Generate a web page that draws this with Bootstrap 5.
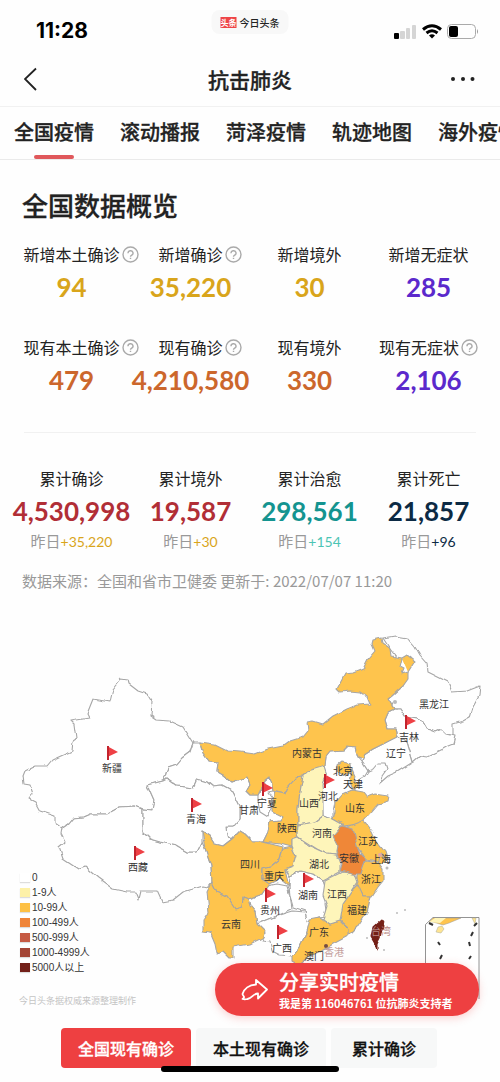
<!DOCTYPE html>
<html lang="zh-CN">
<head>
<meta charset="utf-8">
<meta name="viewport" content="width=device-width, initial-scale=1">
<title>抗击肺炎</title>
<link href="https://cdn.jsdelivr.net/npm/bootstrap@5.3.0/dist/css/bootstrap.min.css" rel="stylesheet">
<style>
  body { font-family: "Noto Sans CJK SC", sans-serif; color: #222; background: #fefefe; overflow-x: hidden; }
  .status-row { height: 54px; padding: 8px 20px 0 36px; }
  .clock { font: 700 21px/40px Inter, sans-serif; color: #000; }
  .app-pill { left: 50%; top: 10px; transform: translateX(-50%); height: 24px; padding: 0 9px; gap: 3px; border-radius: 8px; background: #f8f8f8; font-size: 10px; font-weight: 500; white-space: nowrap; }
  .app-logo { background: #ee4447; color: #fff; font-size: 8px; font-weight: 700; line-height: 11px; }
  .title-row { height: 52px; padding: 0 24px 2px; }
  .title-row h1 { font-size: 21px; line-height: 32px; font-weight: 500; }
  .title-row button { line-height: 0; }
  .title-row h1, .tab-row a, .overview h2, .share-big, .mode-row button { -webkit-text-stroke: .3px currentColor; }
  .tab-row { gap: 26px; padding: 0 14px; border-top: 1px solid #f1f1f1; border-bottom: 1px solid #eaeaea; overflow: hidden; }
  .tab-row a { flex: none; font-size: 20px; line-height: 30px; padding: 10px 0 12px; font-weight: 500; color: #222; text-decoration: none; white-space: nowrap; }
  .tab-row a.active::after { content: ""; position: absolute; left: 50%; bottom: 0; width: 40px; margin-left: -20px; height: 4px; border-radius: 2px; background: #e0585b; }
  .overview { padding: 27px 12px 26px; }
  .overview h2 { font-size: 26px; line-height: 36px; font-weight: 500; padding-left: 10px; margin-bottom: 19px; }
  .stat-row + .stat-row { margin-top: 28px; }
  .stat-label { font-size: 16px; line-height: 24px; white-space: nowrap; }
  .stat-num { font: 700 26px/40px Lato, sans-serif; padding-top: 1px; white-space: nowrap; }
  .stat-day { font-size: 15px; line-height: 20px; color: #999; white-space: nowrap; }
  .stat-day b { font: 400 14px/20px Lato, sans-serif; }
  .help { width: 17px; height: 17px; margin-left: 2px; }
  .help-hang { position: absolute; left: 100%; top: 4px; }
  .rule { height: 1px; background: #f1f1f1; margin: 32px 12px 33px; }
  .source { font-size: 15px; line-height: 24px; color: #999; margin: 17px 0 0 10px; }
  .c-gold { color: #d9a51b; } .c-rust { color: #cc672c; } .c-violet { color: #5b29cc; }
  .c-red { color: #b12e36; } .c-teal { color: #149490; } .c-navy { color: #0c2a44; } .c-mint { color: #4cc4b4; }
  .map-labels { font-size: 10px; fill: #333; text-anchor: middle; }
  .legend { left: 20px; bottom: 44px; font: 10px/15px "Liberation Sans", "Noto Sans CJK SC", sans-serif; color: #333; }
  .legend i { width: 10px; height: 9px; margin-right: 2px; box-shadow: 0 1px 1px #ddd; }
  .credit { left: 19px; bottom: 10px; font-size: 9px; line-height: 16px; color: #c4c4c4; }
  .share-btn { right: 21px; bottom: 3px; border: 0; border-radius: 27px; background: #ee4041; color: #fff; width: 264px; height: 53px; padding: 0 0 0 26px; gap: 11px; box-shadow: 0 2px 8px #ee404140; text-align: left; white-space: nowrap; }
  .share-big { font-size: 20px; line-height: 26px; font-weight: 500; }
  .share-small { font-size: 11px; line-height: 16px; font-weight: 700; }
  .mode-row { padding: 9px 61px 13px; gap: 5px; }
  .mode-row button { border: 0; border-radius: 4px; background: #f7f8f8; color: #111; font-size: 16px; font-weight: 500; line-height: 40px; padding: 0 17px; white-space: nowrap; }
  .mode-row button.active { background: #ee4041; color: #fff; }
  .mode-row button:last-child { padding: 0 21px; }
  .home-bar { left: 50%; bottom: 9px; width: 178px; height: 6px; margin-left: -89px; border-radius: 3px; background: #000; }
</style>
</head>
<body>
<header>
  <div class="status-row position-relative d-flex justify-content-between align-items-center">
    <span class="clock">11:28</span>
    <span class="app-pill position-absolute d-flex align-items-center"><span class="app-logo">头条</span>今日头条</span>
    <svg width="87" height="18" viewBox="0 0 87 18" aria-label="信号 无线网络 电量">
      <rect x="1" y="11" width="5" height="6" rx="1"/>
      <g fill="#d5d5d5"><rect x="7" y="9" width="5" height="8" rx="1"/><rect x="13" y="6" width="4" height="11" rx="1"/><rect x="19" y="3" width="4" height="14" rx="1"/></g>
      <g fill="none" stroke="#000" stroke-width="3"><path d="M30 7.500Q39 0 48 7.500M33.500 11Q39 6.500 44.500 11"/></g>
      <path d="M36 13.500Q39 11 42 13.500L39 16.500Z"/>
      <rect x="54.500" y="2.500" width="28" height="14" rx="4" fill="none" stroke="#aaa"/>
      <rect x="56" y="4" width="9" height="11" rx="2"/><path d="M84 7q2 2.500 0 5z" fill="#999"/>
    </svg>
  </div>
  <div class="title-row d-flex justify-content-between align-items-center">
    <button class="btn p-0 border-0" aria-label="返回"><svg width="26" height="24" viewBox="0 0 26 24" fill="none" stroke="#222" stroke-width="1.800"><path d="M12 1.500 1 12l11 11"/></svg></button>
    <h1 class="m-0">抗击肺炎</h1>
    <button class="btn p-0 border-0" aria-label="更多"><svg width="26" height="6" viewBox="0 0 26 6" fill="#222"><circle cx="3" cy="3" r="2"/><circle cx="13" cy="3" r="2"/><circle cx="22.500" cy="3" r="2"/></svg></button>
  </div>
  <nav class="tab-row d-flex">
    <a href="#" class="active position-relative">全国疫情</a><a href="#">滚动播报</a><a href="#">菏泽疫情</a><a href="#">轨迹地图</a><a href="#">海外疫情</a>
  </nav>
</header>
<svg width="0" height="0" class="position-absolute" aria-hidden="true">
  <defs>
    <g id="helpMark" fill="none" stroke="#aaa" stroke-width="1.400"><circle cx="8.500" cy="8.500" r="7.500"/><path d="M6 7.200a2.500 2.400 0 1 1 3.700 2q-1.200.6-1.200 1.600M8.500 11.700v1.400"/></g>
    <g id="flag"><path d="M0 0 11 6 1.500 10.500V14H0Z" fill="#ee4045"/><path d="M0 0h2v14H0z" fill="#c3242e"/></g>
  </defs>
</svg>
<main>
  <section class="overview">
    <h2>全国数据概览</h2>
    <div class="stat-row row g-0 row-cols-4 text-center">
      <div class="col d-flex flex-column align-items-center"><div class="stat-label position-relative">新增本土确诊<svg class="help help-hang" viewBox="0 0 17 17"><use href="#helpMark"/></svg></div><div class="stat-num c-gold">94</div></div>
      <div class="col d-flex flex-column align-items-center"><div class="stat-label position-relative">新增确诊<svg class="help help-hang" viewBox="0 0 17 17"><use href="#helpMark"/></svg></div><div class="stat-num c-gold">35,220</div></div>
      <div class="col d-flex flex-column align-items-center"><div class="stat-label">新增境外</div><div class="stat-num c-gold">30</div></div>
      <div class="col d-flex flex-column align-items-center"><div class="stat-label">新增无症状</div><div class="stat-num c-violet">285</div></div>
    </div>
    <div class="stat-row row g-0 row-cols-4 text-center">
      <div class="col d-flex flex-column align-items-center"><div class="stat-label position-relative">现有本土确诊<svg class="help help-hang" viewBox="0 0 17 17"><use href="#helpMark"/></svg></div><div class="stat-num c-rust">479</div></div>
      <div class="col d-flex flex-column align-items-center"><div class="stat-label position-relative">现有确诊<svg class="help help-hang" viewBox="0 0 17 17"><use href="#helpMark"/></svg></div><div class="stat-num c-rust">4,210,580</div></div>
      <div class="col d-flex flex-column align-items-center"><div class="stat-label">现有境外</div><div class="stat-num c-rust">330</div></div>
      <div class="col d-flex flex-column align-items-center"><div class="stat-label d-flex align-items-center">现有无症状<svg class="help" viewBox="0 0 17 17"><use href="#helpMark"/></svg></div><div class="stat-num c-violet">2,106</div></div>
    </div>
    <div class="rule"></div>
    <div class="row g-0 row-cols-4 text-center">
      <div class="col d-flex flex-column align-items-center"><div class="stat-label">累计确诊</div><div class="stat-num c-red">4,530,998</div><div class="stat-day">昨日<b class="c-gold">+35,220</b></div></div>
      <div class="col d-flex flex-column align-items-center"><div class="stat-label">累计境外</div><div class="stat-num c-red">19,587</div><div class="stat-day">昨日<b class="c-gold">+30</b></div></div>
      <div class="col d-flex flex-column align-items-center"><div class="stat-label">累计治愈</div><div class="stat-num c-teal">298,561</div><div class="stat-day">昨日<b class="c-mint">+154</b></div></div>
      <div class="col d-flex flex-column align-items-center"><div class="stat-label">累计死亡</div><div class="stat-num c-navy">21,857</div><div class="stat-day">昨日<b class="c-navy">+96</b></div></div>
    </div>
    <p class="source">数据来源：全国和省市卫健委 更新于: 2022/07/07 11:20</p>
  </section>
  <section class="position-relative">
    <svg class="d-block w-100" viewBox="0 620 500 400" role="img" aria-label="全国疫情地图">
      <defs>
        <filter id="coast" x="-5%" y="-5%" width="110%" height="110%" color-interpolation-filters="sRGB"><feTurbulence type="fractalNoise" baseFrequency=".12" numOctaves="1" seed="4"/><feDisplacementMap in="SourceGraphic" scale="5" xChannelSelector="R" yChannelSelector="G"/></filter>
      </defs>
      <g filter="url(#coast)" stroke="#a6a6a6" stroke-width="1.100" stroke-linejoin="round" fill="#fff">
        <path d="M121 680 128 681 129 685 138 692 147 695 152 703 151 717 157 721 170 722 183 728 193 744 190 753 182 759 177 765 168 768 165 778 163 782 147 786 150 793 154 802 152 811 143 810 135 807 120 808 107 815 90 815 83 818 73 819 68 825 62 829 55 824 55 817 40 812 35 803 29 800 33 795 30 786 24 785 23 777 25 772 35 767 47 767 52 761 72 752 73 742 76 740 74 725 71 722 89 719 87 715 93 700 110 703 113 690Z"/>
        <path d="M62 829 68 825 73 819 83 818 90 815 107 815 120 808 135 807 143 810 143 833 150 840 160 843 177 847 187 853 197 853 202 843 205 850 211 867 212 883 208 888 203 887 193 890 183 893 173 901 162 903 157 892 140 892 138 900 135 893 127 893 113 890 98 879 85 868 78 870 63 860 59 848 65 843 61 835Z"/>
        <path d="M193 744 200 744 203 755 208 762 218 763 217 772 222 775 232 783 247 778 250 785 246 792 250 796 258 796 273 800 283 818 280 822 270 823 268 833 263 843 253 843 245 835 240 832 232 840 228 837 227 828 233 828 240 820 240 807 233 793 222 787 213 788 207 783 197 780 193 789 177 787 167 780 163 782 165 778 168 768 177 765 182 759 190 753Z"/>
        <path d="M258 796 263 788 265 782 270 778 272 785 273 792 268 793 273 800 272 810 268 818 260 813 258 803Z"/>
        <path d="M143 810 152 811 154 802 150 793 147 786 163 782 167 780 177 787 193 789 197 780 207 783 213 788 222 787 233 793 240 807 240 820 233 828 227 828 228 837 232 840 223 847 215 845 210 837 202 832 202 843 197 853 187 853 177 847 160 843 150 840 143 833Z"/>
        <path d="M383 639 395 637 407 639 415 648 420 657 427 665 428 673 448 683 452 693 467 692 480 687 479 697 473 708 470 718 463 722 453 725 453 737 447 735 442 730 435 733 427 730 423 723 417 720 405 718 400 710 394 710 388 700 403 687 408 673 390 650Z"/>
        <path d="M388 713 394 710 400 710 405 718 417 720 423 723 427 730 435 733 442 730 447 735 455 737 453 745 448 747 443 750 433 755 427 758 420 757 413 763 410 753 407 743 397 737 395 730 388 730 385 720Z"/>
        <path d="M397 737 407 743 410 753 413 763 397 773 388 777 380 784 382 777 387 770 385 764 378 764 373 770 368 772 362 763 365 755 373 750 383 745Z"/>
        <path d="M325 765 326 758 330 753 343 752 348 747 355 748 358 758 362 763 368 772 365 777 360 780 353 792 343 797 335 803 333 812 333 820 323 817 322 797 320 792 325 785 323 777Z"/>
        <path d="M248 900 263 895 267 887 277 885 287 887 290 897 292 910 277 917 257 925 255 913 250 907Z"/>
        <path d="M290 877 300 872 313 875 323 882 327 893 325 905 327 917 318 918 313 925 307 922 305 912 293 908 290 897 289 887Z"/>
        <path d="M257 925 277 917 293 912 305 913 307 922 310 922 307 933 300 947 292 957 280 956 272 952 270 943 262 942 265 935 258 930Z"/>
        <g fill="#fec44d">
          <path d="M200 744 215 746 227 752 240 753 255 755 268 750 283 747 290 742 303 738 308 732 307 723 313 722 323 725 333 717 347 710 357 706 370 705 367 698 360 693 350 692 340 693 337 690 345 675 353 674 363 670 368 660 375 652 372 645 373 641 382 639 383 645 390 650 391 657 402 659 407 656 415 662 408 673 408 680 403 687 392 697 388 700 394 710 388 713 385 720 388 730 395 730 397 738 383 745 373 750 365 755 363 760 358 758 355 748 348 747 343 752 330 753 326 758 325 767 320 770 308 772 303 777 297 778 288 788 285 795 273 792 272 785 270 778 265 782 258 796 250 796 246 792 250 785 247 778 232 783 222 775 217 772 218 763 208 762 203 755Z"/>
          <path d="M402 659 400 668 404 670 402 675 408 673" fill="#fff"/>
          <path d="M342 763 350 765 351 773 345 777 338 773 338 766Z"/><path d="M352 770 355 777 354 782 358 785 353 791 350 783Z"/>
          <path d="M343 795 352 791 363 793 367 798 375 795 389 797 388 802 378 805 372 812 363 822 360 825 343 827 342 825 333 820 335 813 336 803Z"/>
          <path d="M297 778 303 777 300 793 298 810 298 826 297 835 298 838 292 840 292 848 280 845 263 843 268 833 270 823 280 822 283 818 273 813 273 800 275 793 285 795 288 788Z"/>
          <path d="M202 832 210 837 215 845 223 847 232 840 240 832 245 835 253 843 263 843 283 848 280 860 270 868 262 870 262 880 270 885 263 895 248 900 243 898 242 908 235 910 227 898 217 893 212 883 211 867 205 850Z"/>
          <path d="M283 850 280 860 270 868 262 870 262 880 270 885 280 880 289 887 285 870 293 867 296 857 292 848Z"/>
          <path d="M212 883 217 893 227 898 235 910 242 908 243 898 248 900 250 907 255 913 257 925 265 933 264 938 250 945 233 948 233 959 229 959 223 953 217 955 215 945 210 933 203 932 203 922 209 913 207 893Z"/>
          <path d="M347 828 363 822 365 823 372 832 377 843 385 853 387 860 377 862 365 860 357 847Z"/><path d="M380 855 387 861 378 866Z"/>
          <path d="M365 861 378 863 383 870 383 882 378 888 372 897 363 897 357 887 357 876Z"/>
          <path d="M358 886 363 897 371 897 367 913 357 928 348 937 347 928 340 922 343 905 352 892Z"/>
          <path d="M310 920 320 918 330 925 340 922 348 930 348 937 333 945 320 953 307 958 297 966 292 963 292 957 300 947 307 933Z"/>
        </g>
        <g fill="#fef5ba">
          <path d="M303 777 308 772 325 767 327 773 322 785 323 797 323 817 315 823 298 826 298 810 300 793Z"/>
          <path d="M298 826 315 823 323 817 333 820 342 825 335 837 338 847 337 856 327 855 317 850 298 838 297 835Z"/>
          <path d="M292 840 298 838 310 847 327 855 337 856 340 862 340 873 323 882 313 875 300 872 290 877 285 870 293 867 296 857 292 848Z"/>
          <path d="M325 882 333 878 343 873 355 875 358 883 352 892 343 905 340 922 330 925 323 920 327 907 323 897Z"/>
        </g>
        <path fill="#ef8738" d="M342 827 347 828 353 830 355 837 357 847 360 855 365 860 362 868 360 875 353 875 340 872 342 865 337 853 338 847 333 837Z"/>
        <path fill="#742017" stroke="#742017" d="M382 920 384 923 380 938 377 944 377 951 375 945 371 938 373 928Z"/>
      </g>
      <g fill="#e6a7a5"><circle cx="380" cy="856" r="2"/><circle cx="326" cy="947" r="2" fill="#754c42"/></g>
      <g fill="#bbb"><circle cx="387" cy="869" r="1.500"/><circle cx="397" cy="914" r="1"/><circle cx="405" cy="911" r="1"/><circle cx="384" cy="951" r="1"/><circle cx="395" cy="703" r="2"/><circle cx="367" cy="939" r="1"/></g>
      <path d="M425.500 1000V925.500L433 918.500H479V1000" fill="#fff" stroke="#777" stroke-width=".8"/>
      <path d="M429 923 433 919H461L449 924 443 926 433 923Z" fill="#fec44d" stroke="#999" stroke-width=".5"/><path d="M429 923 435 919H446L440 924Z" fill="#fef5ba"/><path d="M472 919h4l-1 6ZM438 928l4-1 2 3-3 4-5-1Z" fill="#ffe591" stroke="#aa9" stroke-width=".5"/>
      <g stroke="#333" stroke-width="2"><path d="m429 924 4 2M438 943l2 3M442 956l-2 4M477 924l-3 3M473 933l-2 4M469 943l1 4M471 957l-2 3"/></g>
      <g class="map-labels">
        <text x="112" y="773">新疆</text><text x="196" y="824">青海</text><text x="138" y="872">西藏</text><text x="307" y="758">内蒙古</text>
        <text x="434" y="709">黑龙江</text><text x="409" y="742">吉林</text><text x="396" y="758">辽宁</text><text x="343" y="776">北京</text>
        <text x="353" y="789">天津</text><text x="328" y="801">河北</text><text x="309" y="808">山西</text><text x="267" y="808">宁夏</text>
        <text x="249" y="815">甘肃</text><text x="355" y="813">山东</text><text x="287" y="833">陕西</text><text x="322" y="838">河南</text>
        <text x="368" y="846">江苏</text><text x="349" y="863">安徽</text><text x="381" y="864">上海</text><text x="250" y="869">四川</text>
        <text x="319" y="869">湖北</text><text x="371" y="884">浙江</text><text x="274" y="881">重庆</text><text x="308" y="900">湖南</text>
        <text x="337" y="899">江西</text><text x="270" y="915">贵州</text><text x="357" y="915">福建</text><text x="231" y="929">云南</text>
        <text x="319" y="937">广东</text><text x="282" y="953">广西</text><text x="314" y="961">澳门</text><text x="334" y="957" fill="#c5a09d">香港</text><text x="381" y="936" fill="#b98885">台湾</text>
      </g>
      <g><use href="#flag" x="107" y="747"/><use href="#flag" x="191" y="799"/><use href="#flag" x="134" y="847"/><use href="#flag" x="262" y="783"/><use href="#flag" x="324" y="775"/><use href="#flag" x="405" y="716"/><use href="#flag" x="265" y="889"/><use href="#flag" x="303" y="874"/><use href="#flag" x="277" y="926"/></g>
    </svg>
    <ul class="legend list-unstyled position-absolute m-0">
      <li class="d-flex align-items-center"><i style="background:#fff"></i>0</li>
      <li class="d-flex align-items-center"><i style="background:#fdf1a8"></i>1-9人</li>
      <li class="d-flex align-items-center"><i style="background:#fdc044"></i>10-99人</li>
      <li class="d-flex align-items-center"><i style="background:#ef8438"></i>100-499人</li>
      <li class="d-flex align-items-center"><i style="background:#c65a43"></i>500-999人</li>
      <li class="d-flex align-items-center"><i style="background:#a34535"></i>1000-4999人</li>
      <li class="d-flex align-items-center"><i style="background:#722019"></i>5000人以上</li>
    </ul>
    <p class="credit position-absolute m-0">今日头条据权威来源整理制作</p>
    <button class="share-btn position-absolute d-flex align-items-center">
      <svg width="27" height="24" viewBox="0 0 27 24" fill="none" stroke="#fff" stroke-width="1.800" stroke-linejoin="round"><path d="M15 2 26 11.500 17 20.500V15.500C12 15.500 11.500 20 6.500 21 4.500 21.500 3 21.500 1.500 21 5 18.500 1.500 18 1.500 16 3 11 8 7 15 6.500Z"/></svg>
      <span><span class="share-big d-block">分享实时疫情</span><span class="share-small d-block">我是第 116046761 位抗肺炎支持者</span></span>
    </button>
  </section>
</main>
<footer class="position-relative">
  <div class="mode-row d-flex">
    <button class="active">全国现有确诊</button><button>本土现有确诊</button><button>累计确诊</button>
  </div>
  <div class="home-bar position-absolute"></div>
</footer>
<script src="https://cdn.jsdelivr.net/npm/bootstrap@5.3.0/dist/js/bootstrap.bundle.min.js"></script>
</body>
</html>
